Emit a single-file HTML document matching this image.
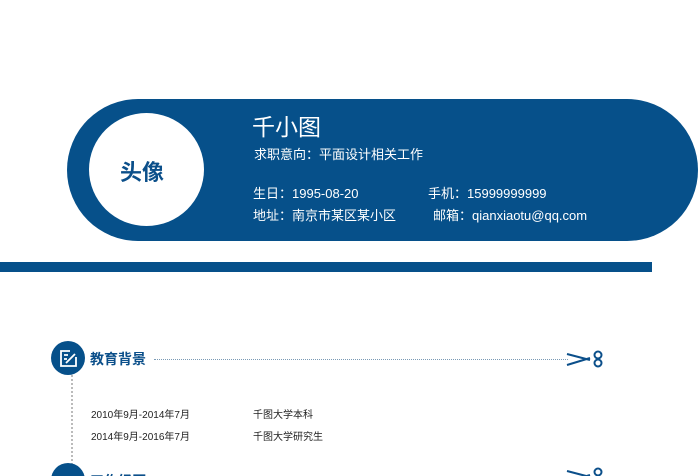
<!DOCTYPE html>
<html><head><meta charset="utf-8"><style>
*{margin:0;padding:0;box-sizing:border-box}
html,body{width:700px;height:476px;overflow:hidden}
body{background:#fff;position:relative;font-family:"Liberation Sans","Noto Sans CJK SC",sans-serif}
.a{position:absolute;white-space:nowrap}
.pill{left:67px;top:99px;width:631px;height:142px;background:#06508a;border-radius:71px}
.circ{left:89px;top:113px;width:115px;height:113px;background:#fff;border-radius:50%}
.w{color:#fff}
.bar{left:0;top:262px;width:652px;height:10px;background:#06508a}
.ic{width:34px;height:34px;border-radius:50%;background:#06508a}
.t{font-size:10px;color:#222}
</style></head><body>
<div class="a pill"></div>
<div class="a circ"></div>
<div class="a" style="left:120px;top:155px;font-size:22px;color:#0b4f8a;font-weight:bold">头像</div>
<div class="a w" style="left:252px;top:108px;font-size:23px">千小图</div>
<div class="a w" style="left:254px;top:144px;font-size:13px">求职意向：平面设计相关工作</div>
<div class="a w" style="left:253px;top:183px;font-size:13px">生日：1995-08-20</div>
<div class="a w" style="left:428px;top:183px;font-size:13px">手机：15999999999</div>
<div class="a w" style="left:253px;top:205px;font-size:13px">地址：南京市某区某小区</div>
<div class="a w" style="left:433px;top:205px;font-size:13px">邮箱：qianxiaotu@qq.com</div>
<div class="a bar"></div>

<div class="a" style="left:71px;top:372px;height:104px;border-left:2px dotted #bbb"></div>
<div class="a ic" style="left:51px;top:341px"></div>
<svg class="a" style="left:51px;top:341px" width="34" height="34" viewBox="0 0 34 34" fill="none" stroke="#fff" stroke-width="1.8"><path d="M19 10H10v15h15v-9"/><path d="M13 14h4M13 18h3M15 22l9-9"/></svg>
<div class="a" style="left:90px;top:349px;font-size:14px;color:#0b4f8a;font-weight:bold">教育背景</div>
<div class="a" style="left:154px;top:359px;width:414px;border-top:1px dotted #7a9ab5"></div>
<svg class="a" style="left:566px;top:350px" width="40" height="18" viewBox="0 0 40 18" fill="none" stroke="#0b4f8a" stroke-width="2"><path d="M1 4L24 10M1 15L24 8"/><circle cx="32" cy="5" r="3.5"/><circle cx="32" cy="13" r="3.5"/></svg>
<div class="a t" style="left:91px;top:406px">2010年9月-2014年7月</div>
<div class="a t" style="left:253px;top:406px">千图大学本科</div>
<div class="a t" style="left:91px;top:428px">2014年9月-2016年7月</div>
<div class="a t" style="left:253px;top:428px">千图大学研究生</div>

<div class="a ic" style="left:51px;top:463px"></div>
<div class="a" style="left:90px;top:471px;font-size:14px;color:#0b4f8a;font-weight:bold">工作经历</div>
<div class="a" style="left:154px;top:481px;width:414px;border-top:1px dotted #7a9ab5"></div>
<svg class="a" style="left:566px;top:467px" width="40" height="18" viewBox="0 0 40 18" fill="none" stroke="#0b4f8a" stroke-width="2"><path d="M1 4L24 10M1 15L24 8"/><circle cx="32" cy="5" r="3.5"/><circle cx="32" cy="13" r="3.5"/></svg>
</body></html>
